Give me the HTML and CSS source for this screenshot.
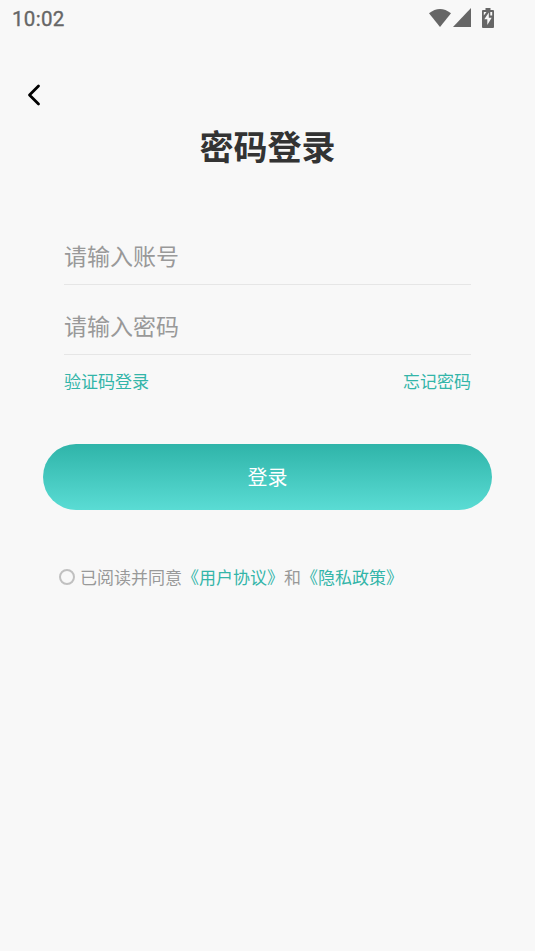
FILE: index.html
```html
<!DOCTYPE html>
<html lang="zh-CN">
<head>
<meta charset="utf-8">
<title>密码登录</title>
<link rel="stylesheet" href="styles.css">
</head>
<body>
<header class="status">
  <time class="clock">10:02</time>
  <div class="status-icons">
    <svg width="24" height="20" viewBox="0 0 24 20"><path d="M1 5.200Q12-3.400 23 5.200L12 19z"/></svg>
    <svg width="18" height="19" viewBox="0 0 18 19"><path d="M18 0v19H0z"/></svg>
    <svg class="battery" width="12" height="20" viewBox="0 0 12 20"><path fill-rule="evenodd" d="M3.500 0h5v2H11q1 0 1 1v16q0 1-1 1H1q-1 0-1-1V3q0-1 1-1h2.500zM6.800 4.500L2.300 11.300H5.300V17L9.700 9.800H6.800zM1.800 4V7.500L4.500 4zM8.300 4V7.500H10.200V4z"/></svg>
  </div>
</header>
<nav class="nav">
  <button class="back" type="button" aria-label="返回">
    <svg width="14" height="22" viewBox="0 0 14 22"><path d="M11.500 2L2.500 11l9 9"/></svg>
  </button>
</nav>
<main>
  <h1 class="title">密码登录</h1>
  <form class="form">
    <input class="field" type="text" placeholder="请输入账号">
    <input class="field" type="password" placeholder="请输入密码">
    <div class="links"><a>验证码登录</a><a>忘记密码</a></div>
    <button class="submit" type="button">登录</button>
    <div class="agree"><span class="radio"></span><span>已阅读并同意<a>《用户协议》</a>和<a>《隐私政策》</a></span></div>
  </form>
</main>
</body>
</html>
```
FILE: styles.css
```css
* {
  box-sizing: border-box;
}

body {
  margin: 0;
  min-height: 951px;
  background: #f8f8f8;
  color: #999;
  font-family: "Noto Sans CJK SC", sans-serif;
}

button,
input {
  margin: 0;
  padding: 0;
  border: 0;
  background: none;
  font-family: inherit;
}

svg {
  display: block;
}

a {
  color: #33b5a9;
}

.status {
  display: flex;
  justify-content: space-between;
  height: 38px;
  padding: 8px 41px 0 12px;
}

.clock {
  color: #666;
  font: 400 20.5px/22px Roboto, sans-serif;
  letter-spacing: 0.3px;
  -webkit-text-stroke: 0.35px #666;
}

.status-icons {
  display: flex;
  align-items: flex-start;
  fill: #666;
}

.status-icons svg:first-child {
  margin-right: 1px;
}

.battery {
  margin-left: 11px;
}

.nav {
  height: 83px;
  padding: 46px 0 0 27px;
}

.back {
  display: block;
}

.back path {
  fill: none;
  stroke: #000;
  stroke-width: 2.8;
  stroke-linecap: round;
  stroke-linejoin: round;
}

.title {
  margin: 0;
  color: #333;
  font-size: 34px;
  font-weight: 700;
  line-height: 50px;
  text-align: center;
}

.form {
  padding: 58px 64px 0;
}

.field {
  display: block;
  width: 100%;
  height: 56px;
  padding-bottom: 4px;
  border-bottom: 1px solid #e6e6e6;
  outline: 0;
  color: #333;
  font-size: 23px;
}

.field + .field {
  margin-top: 14px;
  padding-bottom: 3px;
}

.field::placeholder {
  color: #999;
}

.links {
  display: flex;
  justify-content: space-between;
  margin-top: 13px;
  font-size: 17px;
  line-height: 26px;
}

.submit {
  display: block;
  width: 449px;
  height: 66px;
  margin: 50px -21px 0;
  padding-bottom: 2px;
  border-radius: 33px;
  background: linear-gradient(#2fb4a9, #5adcd4);
  color: #fff;
  font-size: 20px;
}

.agree {
  display: flex;
  align-items: center;
  gap: 5px;
  margin: 54px -6px 0 -5px;
  font-size: 17px;
  line-height: 26px;
  white-space: nowrap;
}

.radio {
  width: 16px;
  height: 16px;
  border: 2px solid #c0c0c0;
  border-radius: 50%;
}
```
